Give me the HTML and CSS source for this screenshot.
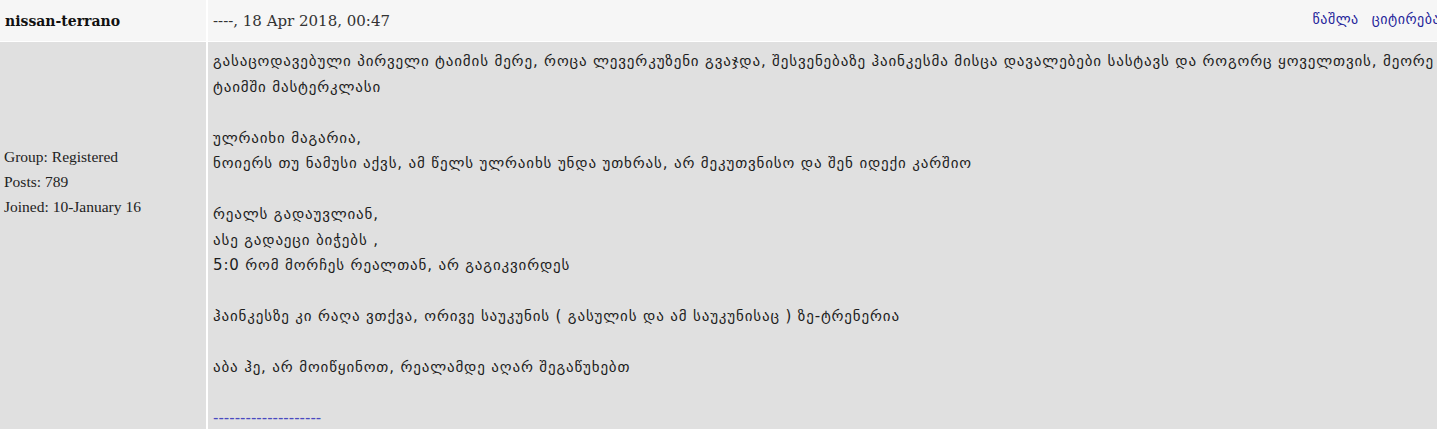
FILE: index.html
```html
<!DOCTYPE html>
<html lang="ka">
<head>
    <meta charset="UTF-8">
    <title>nissan-terrano - პოსტი</title>
    <link rel="stylesheet" href="styles.css">
</head>
<body>
    <!-- One forum post: header row + body row -->
    <div class="post">
        <div class="post-author">nissan-terrano</div>
        <div class="post-meta">
            <span class="post-date">----, 18 Apr 2018, 00:47</span>
            <span class="post-actions">
                <a href="#">წაშლა</a>
                <a href="#">ციტირება</a>
            </span>
        </div>

        <div class="post-user">
            <div>Group: Registered</div>
            <div>Posts: 789</div>
            <div>Joined: 10-January 16</div>
        </div>
        <div class="post-text">
            გასაცოდავებული პირველი ტაიმის მერე, როცა ლევერკუზენი გვაჯდა, შესვენებაზე ჰაინკესმა მისცა დავალებები სასტავს და როგორც ყოველთვის, მეორე ტაიმში მასტერკლასი<br>
            <br>
            ულრაიხი მაგარია,<br>
            ნოიერს თუ ნამუსი აქვს, ამ წელს ულრაიხს უნდა უთხრას, არ მეკუთვნისო და შენ იდექი კარშიო<br>
            <br>
            რეალს გადაუვლიან,<br>
            ასე გადაეცი ბიჭებს ,<br>
            5:0 რომ მორჩეს რეალთან, არ გაგიკვირდეს<br>
            <br>
            ჰაინკესზე კი რაღა ვთქვა, ორივე საუკუნის ( გასულის და ამ საუკუნისაც ) ზე-ტრენერია<br>
            <br>
            აბა ჰე, არ მოიწყინოთ, რეალამდე აღარ შეგაწუხებთ<br>
            <br>
            <span class="signature">--------------------</span>
        </div>
    </div>
</body>
</html>
```

FILE: styles.css
```css
/* Page reset */
html {
    overflow: hidden; /* post is wider than the window, no scrollbars */
}

body {
    margin: 0;
    background: #ffffff;
    font-family: "Liberation Serif", "DejaVu Serif", serif;
    color: #222;
}

/* Post grid: author column + content column */
.post {
    width: 1458px;
    display: grid;
    grid-template-columns: 206px 1fr;
    column-gap: 2px;
    row-gap: 1px;
    background: #ffffff; /* gaps show as white lines */
}

/* Header row */
.post-author {
    background: #f6f6f6;
    height: 41px;
    padding-left: 5px;
    display: flex;
    align-items: center;
    font-family: "DejaVu Serif", serif;
    font-weight: bold;
    font-size: 14px;
    color: #111;
}

.post-meta {
    background: #f6f6f6;
    height: 41px;
    padding: 0 5px;
    display: flex;
    align-items: center;
    justify-content: space-between;
    color: #333;
}

.post-date {
    font-family: "DejaVu Serif", serif;
    font-size: 15px;
}

.post-actions {
    display: flex;
    gap: 13px;
    font-family: "DejaVu Sans", sans-serif;
    font-size: 14px;
    letter-spacing: 0.5px;
    margin-top: -4px;
    margin-right: 13px;
}

.post-actions a {
    color: #24249a;
    text-decoration: none;
}

/* Body row */
.post-user {
    background: #e0e0e0;
    padding: 102px 0 0 4px;
    font-size: 15.5px;
    line-height: 25px;
    color: #222;
}

.post-text {
    background: #e0e0e0;
    padding: 7px 5px 20px 5px;
    font-family: "DejaVu Sans", sans-serif;
    font-size: 15px;
    letter-spacing: 0.85px;
    line-height: 25.5px;
    color: #1c1c1c;
}

.signature {
    color: #4a4ac0;
    letter-spacing: 0;
}
```
